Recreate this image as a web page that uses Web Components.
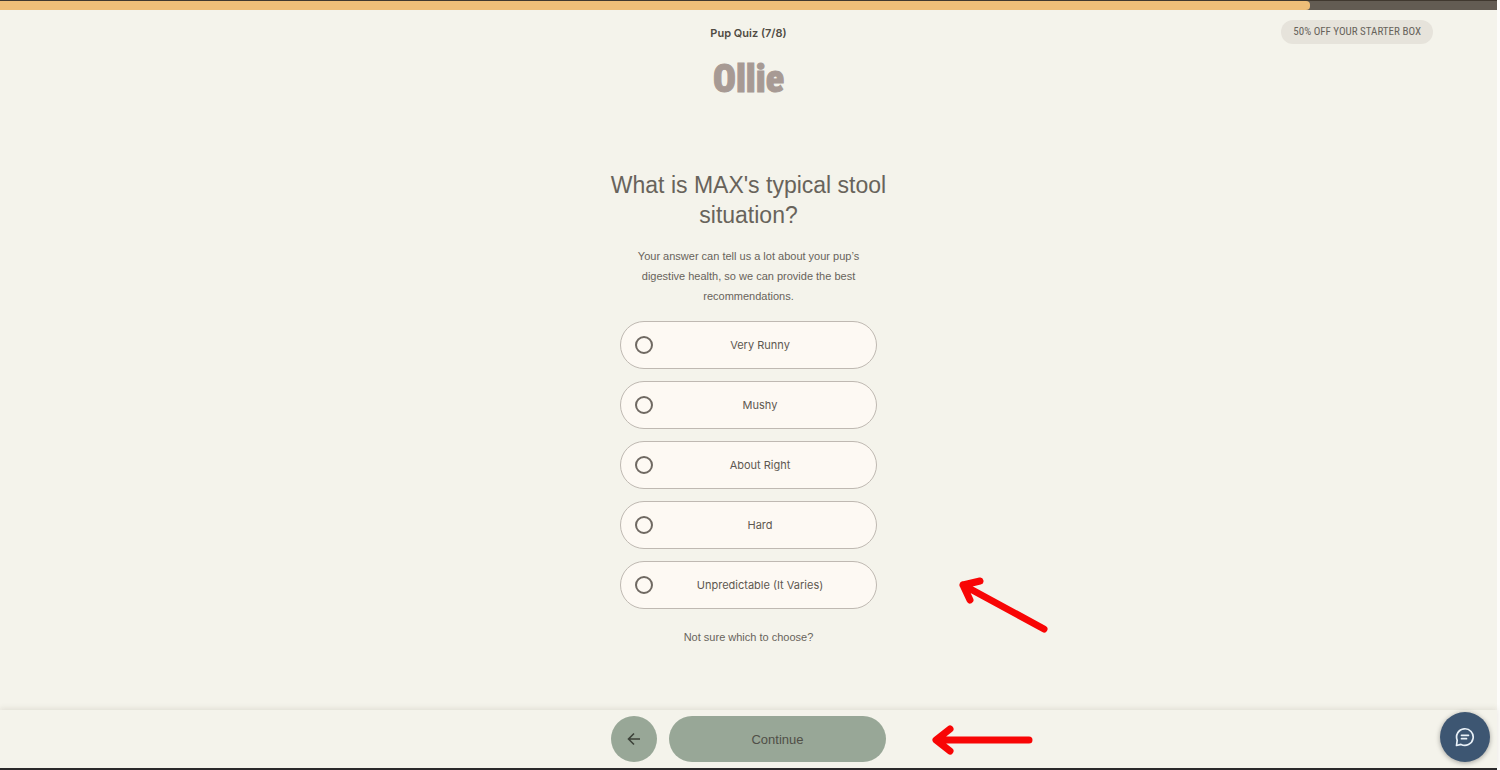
<!DOCTYPE html>
<html lang="en">
<head>
<meta charset="UTF-8">
<meta name="viewport" content="width=device-width, initial-scale=1.0">
<title>Pup Quiz</title>
<style>
  html {
    background: #fdfcfa;
  }
  body {
    margin: 0;
    padding-right: 3px;
    font-family: "Liberation Sans", Arial, sans-serif;
    color: #68635b;
  }
</style>
</head>
<body>
<quiz-page>
  <quiz-progress slot="top" value="7" max="8"></quiz-progress>
  <quiz-header slot="top" step="Pup Quiz (7/8)">50% OFF YOUR STARTER BOX</quiz-header>
  <quiz-question>
    <span slot="title">What is MAX's typical stool situation?</span>
    <span slot="hint">Your answer can tell us a lot about your pup’s digestive health, so we can provide the best recommendations.</span>
    <quiz-choice value="runny">Very Runny</quiz-choice>
    <quiz-choice value="mushy">Mushy</quiz-choice>
    <quiz-choice value="right">About Right</quiz-choice>
    <quiz-choice value="hard">Hard</quiz-choice>
    <quiz-choice value="varies">Unpredictable (It Varies)</quiz-choice>
    <span slot="help">Not sure which to choose?</span>
  </quiz-question>
  <quiz-footer slot="bottom">Continue</quiz-footer>
</quiz-page>
<chat-button></chat-button>
<red-arrows></red-arrows>

<script>
class QuizPage extends HTMLElement {
  constructor() {
    super();
    this.attachShadow({ mode: "open" });
    this.shadowRoot.innerHTML = `
      <style>
        :host {
          display: flex;
          flex-direction: column;
          box-sizing: border-box;
          min-height: 100vh;
          background: #f4f3eb;
          border-top: 1px solid #40382f;
          border-bottom: 2px solid #29282a;
        }
        main {
          flex: 1;
          padding: 65px 16px 40px;
        }
      </style>
      <slot name="top"></slot>
      <main><slot></slot></main>
      <slot name="bottom"></slot>
    `;
  }
}
customElements.define("quiz-page", QuizPage);

class QuizProgress extends HTMLElement {
  constructor() {
    super();
    this.attachShadow({ mode: "open" });
  }

  connectedCallback() {
    const value = Number(this.getAttribute("value"));
    const max = Number(this.getAttribute("max"));
    this.shadowRoot.innerHTML = `
      <style>
        :host {
          display: block;
          height: 9px;
          background: #635c53;
        }
        .bar {
          width: ${(value / max) * 100}%;
          height: 100%;
          background: #efbe78;
          border-radius: 0 4px 4px 0;
        }
      </style>
      <div class="bar" role="progressbar" aria-valuenow="${value}" aria-valuemax="${max}"></div>
    `;
  }
}
customElements.define("quiz-progress", QuizProgress);

class QuizHeader extends HTMLElement {
  constructor() {
    super();
    this.attachShadow({ mode: "open" });
  }

  connectedCallback() {
    this.shadowRoot.innerHTML = `
      <style>
        :host {
          display: grid;
          grid-template-columns: 1fr auto 1fr;
          padding: 10px 64px 0;
        }
        .brand {
          grid-column: 2;
          text-align: center;
        }
        .step {
          font-family: Inter, sans-serif;
          font-size: 11px;
          line-height: 26px;
          font-weight: 600;
          color: #504b43;
        }
        .logo {
          display: block;
          margin-top: 7px;
          font-family: "Roboto Condensed", "Liberation Sans Narrow", "DejaVu Sans Condensed", sans-serif;
          font-size: 38px;
          line-height: 52px;
          font-weight: 900;
          color: #a79a94;
          -webkit-text-stroke: 1px #a79a94;
          text-decoration: none;
        }
        .promo {
          justify-self: end;
          align-self: start;
          padding: 0 12px;
          border-radius: 12px;
          background: #e6e3db;
          font-family: "Roboto Condensed", "Liberation Sans Narrow", Roboto, sans-serif;
          font-size: 11px;
          line-height: 24px;
        }
      </style>
      <div class="brand">
        <div class="step">${this.getAttribute("step")}</div>
        <a class="logo" href="#">Ollie</a>
      </div>
      <div class="promo"><slot></slot></div>
    `;
  }
}
customElements.define("quiz-header", QuizHeader);

class QuizQuestion extends HTMLElement {
  constructor() {
    super();
    this.attachShadow({ mode: "open" });
    this.shadowRoot.innerHTML = `
      <style>
        :host {
          display: flex;
          flex-direction: column;
          align-items: center;
          text-align: center;
        }
        h1 {
          max-width: 290px;
          margin: 0 0 16px;
          font-size: 23px;
          line-height: 30px;
          font-weight: 400;
        }
        p {
          max-width: 240px;
          margin: 0 0 15px;
          font-size: 11px;
          line-height: 20px;
        }
        .choices {
          display: flex;
          flex-direction: column;
          gap: 12px;
          width: 257px;
        }
        a {
          margin-top: 18px;
          font-size: 11px;
          line-height: 20px;
          color: inherit;
          text-decoration: none;
        }
      </style>
      <h1><slot name="title"></slot></h1>
      <p><slot name="hint"></slot></p>
      <div class="choices" role="radiogroup"><slot></slot></div>
      <a href="#"><slot name="help"></slot></a>
    `;
    // radios sit in separate shadow roots, so the group is kept here
    this.addEventListener("choice", (e) => {
      this.querySelectorAll("quiz-choice").forEach(choice => {
        if (choice !== e.target) choice.clear();
      });
    });
  }
}
customElements.define("quiz-question", QuizQuestion);

class QuizChoice extends HTMLElement {
  constructor() {
    super();
    this.attachShadow({ mode: "open" });
  }

  connectedCallback() {
    this.shadowRoot.innerHTML = `
      <style>
        :host {
          display: block;
        }
        label {
          display: flex;
          align-items: center;
          box-sizing: border-box;
          height: 48px;
          padding: 0 9px 0 14px;
          border: 1px solid #bfb9b2;
          border-radius: 24px;
          background: #fdf9f3;
          font-family: Inter, sans-serif;
          font-size: 11px;
          color: #5d5850;
          cursor: pointer;
        }
        input {
          appearance: none;
          box-sizing: border-box;
          width: 18px;
          height: 18px;
          margin: 0;
          border: 2px solid #6f6962;
          border-radius: 50%;
        }
        input:checked {
          background: #6f6962;
          box-shadow: inset 0 0 0 3px #fdf9f3;
        }
        span {
          flex: 1;
        }
      </style>
      <label>
        <input type="radio" name="stool" value="${this.getAttribute("value")}">
        <span><slot></slot></span>
      </label>
    `;
    this.shadowRoot.querySelector("input").addEventListener("change", () => {
      this.dispatchEvent(new CustomEvent("choice", { bubbles: true }));
    });
  }

  clear() {
    this.shadowRoot.querySelector("input").checked = false;
  }
}
customElements.define("quiz-choice", QuizChoice);

class QuizFooter extends HTMLElement {
  constructor() {
    super();
    this.attachShadow({ mode: "open" });
    this.shadowRoot.innerHTML = `
      <style>
        :host {
          position: sticky;
          bottom: 0;
          display: flex;
          justify-content: center;
          gap: 12px;
          padding: 6px 16px;
          background: #f4f3eb;
          box-shadow: 0 -1px 6px rgba(90, 80, 60, 0.14);
        }
        button {
          height: 46px;
          padding: 0;
          border: none;
          border-radius: 23px;
          background: #98a797;
          color: #504f47;
          font-family: inherit;
          font-size: 13px;
          cursor: pointer;
        }
        .back {
          display: grid;
          place-items: center;
          width: 46px;
          color: #3c4239;
        }
        .next {
          width: 217px;
        }
      </style>
      <button class="back" aria-label="Back">
        <svg width="14" height="14" viewBox="0 0 14 14" fill="none" stroke="currentColor" stroke-width="1.6">
          <path d="M13 7H2M7 1.5L1.5 7L7 12.5"/>
        </svg>
      </button>
      <button class="next"><slot></slot></button>
    `;
  }
}
customElements.define("quiz-footer", QuizFooter);

class ChatButton extends HTMLElement {
  constructor() {
    super();
    this.attachShadow({ mode: "open" });
    this.shadowRoot.innerHTML = `
      <style>
        :host {
          position: fixed;
          right: 10px;
          bottom: 8px;
        }
        button {
          display: grid;
          place-items: center;
          width: 50px;
          height: 50px;
          padding: 0;
          border: none;
          border-radius: 50%;
          background: #3d5672;
          box-shadow: 0 1px 5px rgba(0, 0, 0, 0.35);
          color: #e9f1f8;
          cursor: pointer;
        }
      </style>
      <button aria-label="Open chat">
        <svg width="20" height="20" viewBox="0 0 20 20" fill="none" stroke="currentColor" stroke-width="1.7" stroke-linecap="round" stroke-linejoin="round">
          <path d="M1.5 18.5L2.2 13.2A8.3 8.3 0 1 1 6 17.4Z"/>
          <path d="M6.5 8.3H13.5M6.5 11.7H11.5"/>
        </svg>
      </button>
    `;
  }
}
customElements.define("chat-button", ChatButton);

// callout arrows over the last choice and the continue button
class RedArrows extends HTMLElement {
  constructor() {
    super();
    this.attachShadow({ mode: "open" });
    this.shadowRoot.innerHTML = `
      <style>
        :host {
          position: absolute;
          top: 570px;
          left: calc(50% + 176px);
          pointer-events: none;
        }
        svg {
          display: block;
        }
      </style>
      <svg width="130" height="190" viewBox="0 0 130 190" fill="none" stroke="#f80505" stroke-width="7" stroke-linecap="round" stroke-linejoin="round">
        <path d="M118 59L37 15M54 11L37 15L44 30"/>
        <path d="M103 170H11M24 159L10 170L24 181"/>
      </svg>
    `;
  }
}
customElements.define("red-arrows", RedArrows);
</script>
</body>
</html>
